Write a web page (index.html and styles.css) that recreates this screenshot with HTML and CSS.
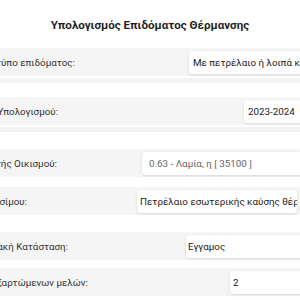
FILE: index.html
```html
<!DOCTYPE html>
<html lang="el">
<head>
<meta charset="utf-8">
<link rel="stylesheet" href="styles.css">
</head>
<body>
<div class="page">
  <h1 class="title">Υπολογισμός Επιδόματος Θέρμανσης</h1>
  <div class="form">
    <div class="row r1">
      <div class="label"><span>Επιλογή τύπο επιδόματος:</span></div>
      <div class="field">Με πετρέλαιο ή λοιπά καύσιμα</div>
    </div>
    <div class="band b1"></div>
    <div class="row r2">
      <div class="label"><span>Έτος Υπολογισμού:</span></div>
      <div class="field">2023-2024</div>
    </div>
    <div class="band b2"></div>
    <div class="row r3">
      <div class="label"><span>Συντελεστής Οικισμού:</span></div>
      <div class="field disabled">0.63 - Λαμία, η [ 35100 ]</div>
    </div>
    <div class="row r4">
      <div class="label"><span>Είδος Καυσίμου:</span></div>
      <div class="field">Πετρέλαιο εσωτερικής καύσης θέρμανσης</div>
    </div>
    <div class="row r5">
      <div class="label"><span>Οικογενειακή Κατάσταση:</span></div>
      <div class="field">Εγγαμος</div>
    </div>
    <div class="row r6">
      <div class="label"><span>Αριθμός εξαρτώμενων μελών:</span></div>
      <div class="field">2</div>
    </div>
  </div>
</div>
</body>
</html>
```
FILE: styles.css
```css
html, body {
  margin: 0;
  padding: 0;
  background: #ffffff;
  overflow: hidden;
}
.page {
  width: 300px;
  height: 300px;
  overflow: hidden;
  font-family: Roboto, "Noto Sans", sans-serif;
  color: #2b2b2b;
}
.title {
  margin: 0;
  padding-top: 17px;
  height: 32px;
  box-sizing: border-box;
  font-size: 11.6px;
  font-weight: 700;
  text-align: center;
  color: #1f1f1f;
  line-height: 16px;
}
.form {
  display: flex;
  flex-direction: column;
}
.row {
  display: flex;
  align-items: center;
  height: 28px;
  background: #f5f5f5;
  width: 340px;
  font-size: 9.8px;
}
.label {
  flex: none;
  display: flex;
  justify-content: flex-end;
  white-space: nowrap;
  color: #333333;
}
.field {
  flex: none;
  height: 23px;
  line-height: 23px;
  box-sizing: border-box;
  padding: 0 4px;
  background: #ffffff;
  border-radius: 4px;
  box-shadow: 0 1px 3px rgba(0, 0, 0, 0.12);
  white-space: nowrap;
  overflow: hidden;
  color: #222222;
  width: 160px;
}
.field.disabled {
  color: #666666;
  padding-left: 7px;
}
.band {
  height: 5px;
  background: #f3f3f3;
}
.b1 { margin-top: 2px; margin-bottom: 14px; }
.b2 { margin-top: 2px; margin-bottom: 17px; }
.r1 { margin-top: 16px; }
.r4 { margin-top: 10px; }
.r5 { margin-top: 17px; }
.r6 { margin-top: 8px; }

.r1 .label { width: 75px; }
.r1 .field { margin-left: 114px; }
.r2 .label { width: 58px; }
.r2 .field { margin-left: 186px; }
.r3 .label { width: 57px; }
.r3 .field { margin-left: 85px; }
.r4 .label { width: 27px; }
.r4 .field { margin-left: 110px; padding-left: 3px; }
.r5 .label { width: 68px; }
.r5 .field { margin-left: 118px; padding-left: 2px; }
.r6 .label { width: 88px; }
.r6 .field { margin-left: 142px; padding-left: 3px; }
```
